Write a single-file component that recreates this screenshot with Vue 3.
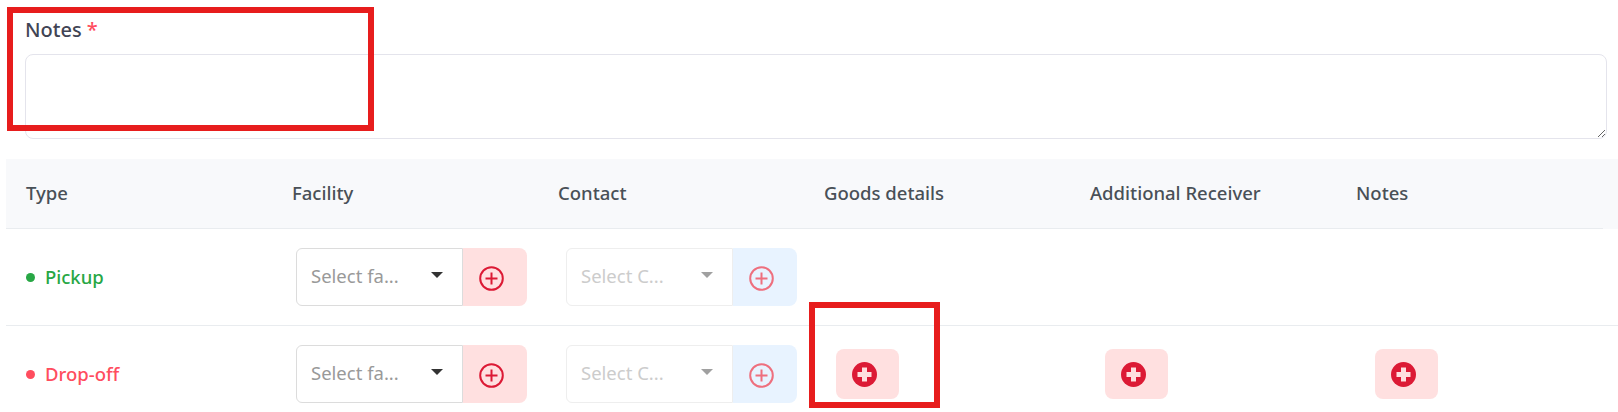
<script setup>
const columns = ['Type', 'Facility', 'Contact', 'Goods details', 'Additional Receiver', 'Notes']

const rows = [
  { name: 'Pickup', kind: 'pickup', extras: 0 },
  { name: 'Drop-off', kind: 'dropoff', extras: 3 }
]
</script>

<template>
  <div class="page">
    <label class="field-label" for="notes">Notes <span class="required">*</span></label>
    <textarea id="notes" class="notes-input"></textarea>

    <div class="table">
      <div class="table-head">
        <div class="head-row">
          <div v-for="col in columns" :key="col" class="head-cell">{{ col }}</div>
        </div>
      </div>

      <div v-for="row in rows" :key="row.name" class="table-row">
        <div :class="`type-cell ${row.kind}`">
          <span class="dot"></span>{{ row.name }}
        </div>

        <div class="select-group">
          <div class="select-box">
            <span>Select fa...</span>
            <span class="caret"></span>
          </div>
          <button class="add-btn" type="button">
            <svg width="25" height="25" viewBox="0 0 25 25">
              <circle cx="12.5" cy="12.5" r="11.3" fill="none" stroke="#dc1a35" stroke-width="2" />
              <path d="M12.5 6.5v12M6.5 12.5h12" stroke="#dc1a35" stroke-width="2" />
            </svg>
          </button>
        </div>

        <div class="select-group disabled">
          <div class="select-box">
            <span>Select C...</span>
            <span class="caret"></span>
          </div>
          <button class="add-btn" type="button">
            <svg width="25" height="25" viewBox="0 0 25 25">
              <circle cx="12.5" cy="12.5" r="11.3" fill="none" stroke="#ee6f7e" stroke-width="2" />
              <path d="M12.5 6.5v12M6.5 12.5h12" stroke="#ee6f7e" stroke-width="2" />
            </svg>
          </button>
        </div>

        <div v-for="n in row.extras" :key="n" class="extra-cell">
          <button class="solid-btn" type="button">
            <svg width="25" height="25" viewBox="0 0 25 25">
              <circle cx="12.5" cy="12.5" r="12.5" fill="#dc1a35" />
              <path d="M12.5 5.5v14M5.5 12.5h14" stroke="#ffe0e0" stroke-width="5" />
            </svg>
          </button>
        </div>
      </div>
    </div>

    <!-- annotations drawn over the screenshot -->
    <div class="mark mark-notes"></div>
    <div class="mark mark-goods"></div>
  </div>
</template>

<style>
html,
body {
  margin: 0;
  background: #fff;
}
</style>

<style scoped>
.page {
  position: relative;
  width: 1618px;
  height: 412px;
  overflow: hidden;
  padding-top: 16px;
  box-sizing: border-box;
  font-family: "Noto Sans", "Open Sans", sans-serif;
}

.field-label {
  display: block;
  margin-left: 25px;
  font-size: 20px;
  line-height: 27px;
  font-weight: 500;
  color: #414454;
}

.required {
  color: #ff4d5e;
}

.notes-input {
  display: block;
  box-sizing: border-box;
  width: 1582px;
  height: 85px;
  margin: 11px 0 20px 25px;
  border: 1px solid #e4e4ec;
  border-radius: 8px;
  outline: none;
  resize: both;
}

.table {
  margin-left: 6px;
}

.table-head {
  background: #f8f9fb;
}

.head-row {
  display: grid;
  grid-template-columns: repeat(6, 266px);
  align-items: center;
  box-sizing: border-box;
  width: 1597px;
  height: 70px;
  padding: 0 0 3px 20px;
  border-bottom: 1px solid #e9ecef;
}

.head-cell {
  font-size: 18.5px;
  font-weight: 500;
  color: #495057;
}

.table-row {
  display: grid;
  grid-template-columns: 270px 270px 270px 269px 270px 270px;
  align-items: center;
  min-height: 96px;
  padding-left: 20px;
  border-bottom: 1px solid #e9ecef;
}

.table-row:last-child {
  border-bottom: 0;
}

.type-cell {
  display: flex;
  align-items: center;
  padding-bottom: 2px;
  font-size: 18.5px;
  font-weight: 500;
}

.dot {
  width: 9px;
  height: 9px;
  margin: 2px 10px 0 0;
  border-radius: 50%;
  background: currentColor;
}

.pickup {
  color: #28a745;
}

.dropoff {
  color: #ff4d5e;
}

.select-group {
  display: flex;
  width: 231px;
  height: 58px;
}

.select-box {
  display: flex;
  align-items: center;
  justify-content: space-between;
  box-sizing: border-box;
  width: 167px;
  padding: 0 19px 4px 14px;
  border: 1px solid #dcdcdc;
  border-radius: 6px 0 0 6px;
  font-size: 18.5px;
  color: #999;
}

.caret {
  width: 0;
  height: 0;
  border-left: 6px solid transparent;
  border-right: 6px solid transparent;
  border-top: 6px solid #333;
}

.add-btn {
  flex: 1;
  display: flex;
  align-items: center;
  padding: 3px 0 0 16px;
  border: 0;
  border-radius: 0 8px 8px 0;
  background: #ffe0e0;
}

.disabled .select-box {
  border-color: #eeeeee;
  color: #cccccc;
}

.disabled .caret {
  border-top-color: #a0a0a0;
}

.disabled .add-btn {
  background: #e8f3ff;
}

.extra-cell {
  display: flex;
  align-items: center;
}

.solid-btn {
  display: flex;
  align-items: center;
  width: 63px;
  height: 50px;
  padding: 0 0 0 16px;
  border: 0;
  border-radius: 8px;
  background: #ffe0e0;
}

.mark {
  position: absolute;
  box-sizing: border-box;
  border: 6px solid #e71d1d;
}

.mark-notes {
  left: 7px;
  top: 7px;
  width: 367px;
  height: 124px;
}

.mark-goods {
  left: 809px;
  top: 302px;
  width: 131px;
  height: 106px;
}
</style>
